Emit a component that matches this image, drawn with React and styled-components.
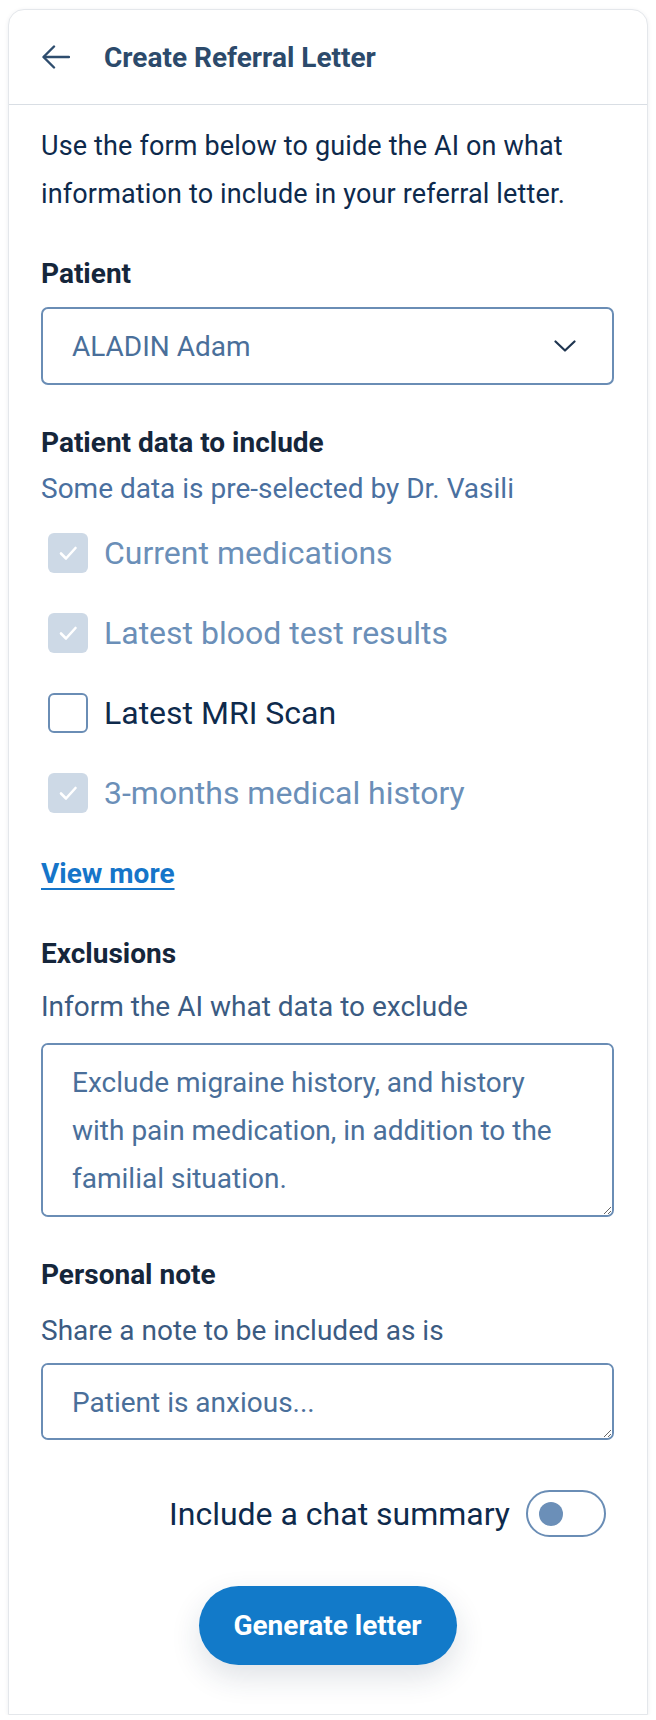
import React from "react";
import styled, { createGlobalStyle } from "styled-components";

const Global = createGlobalStyle`
  html, body { margin: 0; padding: 0; background: #ffffff; }
  body { padding: 8px 8px 0; font-family: Roboto, "Noto Sans", "Liberation Sans", sans-serif; }
  * { box-sizing: border-box; }
`;

const Card = styled.div`
  width: 640px;
  margin-top: 1px;
  background: #fff;
  border: 1px solid #e4e7eb;
  border-radius: 16px 16px 0 0;
  box-shadow: 0 1px 4px rgba(20, 40, 70, 0.08);
  display: flex;
  flex-direction: column;
`;

const Header = styled.div`
  height: 95px;
  display: flex;
  align-items: center;
  gap: 34px;
  padding: 0 0 0 33px;
  border-bottom: 1px solid #d9dee4;
`;

const BackButton = styled.button`
  border: none;
  background: none;
  padding: 0;
  display: flex;
  align-items: center;
  color: #2e4d6e;
  cursor: pointer;
`;

const Title = styled.h1`
  margin: 0;
  font-size: 28px;
  font-weight: 700;
  color: #2c4a6b;
`;

const Body = styled.div`
  padding: 17px 33px 49px 32px;
  display: flex;
  flex-direction: column;
`;

const Intro = styled.p`
  margin: 0;
  font-size: 27px;
  letter-spacing: 0.15px;
  line-height: 48px;
  color: #0e2a4c;
`;

const Label = styled.div`
  margin-top: ${(p) => p.$mt || 0}px;
  font-size: 28px;
  line-height: 40px;
  font-weight: 700;
  color: #15263b;
`;

const Hint = styled.div`
  margin-top: ${(p) => p.$mt || 0}px;
  font-size: 28px;
  line-height: 40px;
  color: ${(p) => p.$color || "#3b5b82"};
`;

const Select = styled.div`
  margin-top: 13px;
  height: 78px;
  border: 2px solid #6a8db5;
  border-radius: 7px;
  display: flex;
  align-items: center;
  justify-content: space-between;
  padding: 0 36px 0 29px;
  font-size: 28px;
  color: #4a6f9a;
`;

const CheckList = styled.div`
  margin-top: 4px;
  display: flex;
  flex-direction: column;
`;

const CheckRow = styled.label`
  height: 80px;
  display: flex;
  align-items: center;
  gap: 16px;
  padding-left: 7px;
  font-size: 32px;
  color: ${(p) => (p.$checked ? "#6b8fb8" : "#0e2a4c")};
`;

const Box = styled.span`
  width: 40px;
  height: 40px;
  flex: none;
  border-radius: 6px;
  display: flex;
  align-items: center;
  justify-content: center;
  background: ${(p) => (p.$checked ? "#cdd9e6" : "#fff")};
  border: ${(p) => (p.$checked ? "none" : "2px solid #6a8db5")};
`;

const ViewMore = styled.a`
  margin-top: 21px;
  align-self: flex-start;
  font-size: 28px;
  line-height: 40px;
  font-weight: 700;
  color: #1575c9;
  text-decoration: underline;
  text-underline-offset: 5px;
  text-decoration-thickness: 2px;
`;

const TextArea = styled.textarea`
  margin-top: ${(p) => p.$mt || 0}px;
  height: ${(p) => p.$h}px;
  width: 100%;
  border: 2px solid #6a8db5;
  border-radius: 7px;
  padding: 14px 56px 14px 29px;
  font-family: Roboto, "Noto Sans", sans-serif;
  font-size: 28px;
  line-height: 48px;
  color: #4a6f9a;
  resize: vertical;
  outline: none;
  &::placeholder { color: #4a6f9a; opacity: 1; }
`;

const ToggleRow = styled.div`
  margin-top: 50px;
  display: flex;
  justify-content: flex-end;
  align-items: center;
  gap: 16px;
  padding-right: 8px;
  font-size: 32px;
  color: #0e2a4c;
`;

const Toggle = styled.span`
  width: 80px;
  height: 47px;
  border: 2px solid #6a8db5;
  border-radius: 24px;
  display: flex;
  align-items: center;
  padding-left: 11px;
  &::before {
    content: "";
    width: 24px;
    height: 24px;
    border-radius: 50%;
    background: #6b8fb8;
  }
`;

const GenerateButton = styled.button`
  margin-top: 49px;
  align-self: center;
  width: 258px;
  height: 79px;
  border: none;
  border-radius: 40px;
  background: #127ac9;
  color: #fff;
  font-family: Roboto, "Noto Sans", sans-serif;
  font-size: 28px;
  font-weight: 700;
  box-shadow: 0 12px 30px rgba(30, 50, 80, 0.14);
  cursor: pointer;
`;

const ArrowLeft = () => (
  <svg width="28" height="24" viewBox="0 0 28 24" fill="none" stroke="currentColor" strokeWidth="2.4" strokeLinecap="round" strokeLinejoin="round">
    <path d="M27 12H2" />
    <path d="M12 1.5L1.5 12 12 22.5" />
  </svg>
);

const Chevron = () => (
  <svg width="22" height="12" viewBox="0 0 22 12" fill="none" stroke="#1f3550" strokeWidth="2.2" strokeLinecap="round" strokeLinejoin="round">
    <path d="M1.5 1.5L11 10.5 20.5 1.5" />
  </svg>
);

const Check = () => (
  <svg width="20" height="16" viewBox="0 0 20 16" fill="none" stroke="#fff" strokeWidth="2.6" strokeLinecap="round" strokeLinejoin="round">
    <path d="M3 8.5l5 5L17.5 3" />
  </svg>
);

const items = [
  { label: "Current medications", checked: true },
  { label: "Latest blood test results", checked: true },
  { label: "Latest MRI Scan", checked: false },
  { label: "3-months medical history", checked: true },
];

export default function App() {
  return (
    <>
      <Global />
      <Card>
        <Header>
          <BackButton aria-label="Back"><ArrowLeft /></BackButton>
          <Title>Create Referral Letter</Title>
        </Header>
        <Body>
          <Intro>Use the form below to guide the AI on what information to include in your referral letter.</Intro>
          <Label $mt={36}>Patient</Label>
          <Select>
            <span>ALADIN Adam</span>
            <Chevron />
          </Select>
          <Label $mt={38}>Patient data to include</Label>
          <Hint $mt={6} $color="#4a70a0">Some data is pre-selected by Dr. Vasili</Hint>
          <CheckList>
            {items.map((it) => (
              <CheckRow key={it.label} $checked={it.checked}>
                <Box $checked={it.checked}>{it.checked && <Check />}</Box>
                {it.label}
              </CheckRow>
            ))}
          </CheckList>
          <ViewMore href="#">View more</ViewMore>
          <Label $mt={40}>Exclusions</Label>
          <Hint $mt={13}>Inform the AI what data to exclude</Hint>
          <TextArea
            $mt={16}
            $h={174}
            defaultValue="Exclude migraine history, and history with pain medication, in addition to the familial situation."
          />
          <Label $mt={38}>Personal note</Label>
          <Hint $mt={16}>Share a note to be included as is</Hint>
          <TextArea $mt={12} $h={77} placeholder="Patient is anxious..." />
          <ToggleRow>
            Include a chat summary
            <Toggle />
          </ToggleRow>
          <GenerateButton>Generate letter</GenerateButton>
        </Body>
      </Card>
    </>
  );
}
